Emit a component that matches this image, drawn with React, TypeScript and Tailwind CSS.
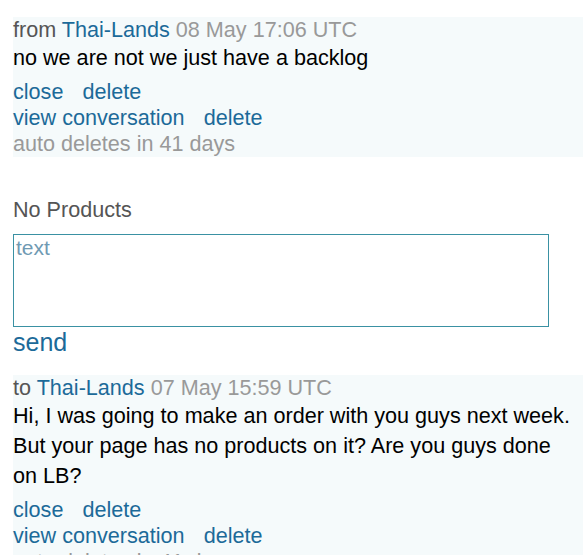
const font = { fontFamily: '"Liberation Sans", Arial, sans-serif' };

interface Message {
  dir: string;
  who: string;
  when: string;
  body: string;
}

function MessageCard({ m }: { m: Message }) {
  return (
    <div className="bg-[#f5fafb] text-[21.6px] pr-[10px]">
      <div className="leading-[26px] text-[#555]">
        {m.dir} <a className="text-[#1c6a99]">{m.who}</a> <span className="text-[#999]">{m.when}</span>
      </div>
      <p className="leading-[30px] text-black mb-[6px]">{m.body}</p>
      <div className="leading-[26px] text-[#1c6a99]">
        <div className="flex gap-[19px]">
          <a>close</a>
          <a>delete</a>
        </div>
        <div className="flex gap-[19px]">
          <a>view conversation</a>
          <a>delete</a>
        </div>
      </div>
      <div className="leading-[26px] text-[#999]">auto deletes in 41 days</div>
    </div>
  );
}

export default function App() {
  return (
    <div className="h-[555px] overflow-hidden bg-white" style={font}>
      <div className="pl-[13px] pt-[17px] w-[585px]">
        <MessageCard
          m={{ dir: 'from', who: 'Thai-Lands', when: '08 May 17:06 UTC', body: 'no we are not we just have a backlog' }}
        />
        <div className="pt-[40px] w-[536px]">
          <div className="text-[21.6px] leading-[26px] text-[#555]">No Products</div>
          <textarea
            placeholder="text"
            className="block mt-[11px] w-[536px] h-[93px] border border-[#3a91a3] bg-white text-[21px] leading-[26px] px-[2px] py-0 placeholder:text-[#6f9ab3] resize-none outline-none"
          />
          <a className="block text-[25px] leading-[30px] text-[#1c6a99] mb-[18px]">send</a>
        </div>
        <MessageCard
          m={{
            dir: 'to',
            who: 'Thai-Lands',
            when: '07 May 15:59 UTC',
            body: 'Hi, I was going to make an order with you guys next week. But your page has no products on it? Are you guys done on LB?',
          }}
        />
      </div>
    </div>
  );
}
